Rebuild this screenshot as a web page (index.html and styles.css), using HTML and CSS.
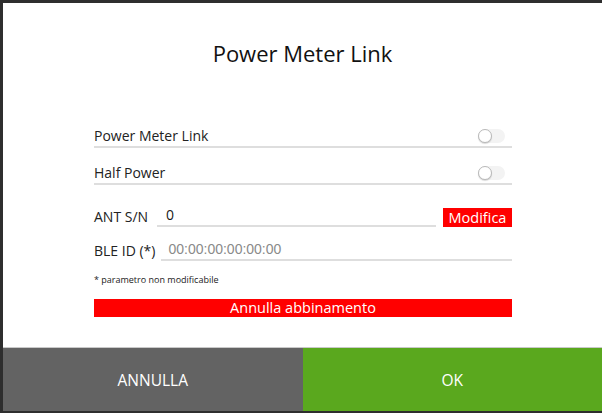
FILE: index.html
```html
<!DOCTYPE html>
<html lang="it">
<head>
<meta charset="utf-8">
<title>Power Meter Link</title>
<link rel="stylesheet" href="styles.css">
</head>
<body>
<div class="dialog">
  <div class="content">
    <h1 class="title">Power Meter Link</h1>
    <div class="form">
      <div class="row toggle-row first">
        <span class="label">Power Meter Link</span>
        <span class="switch"><span class="knob"></span></span>
      </div>
      <div class="row toggle-row">
        <span class="label">Half Power</span>
        <span class="switch"><span class="knob"></span></span>
      </div>
      <div class="field-row ant">
        <span class="label">ANT S/N</span>
        <span class="input value">0</span>
        <span class="btn-small">Modifica</span>
      </div>
      <div class="field-row ble">
        <span class="label">BLE ID (*)</span>
        <span class="input placeholder">00:00:00:00:00:00</span>
      </div>
      <div class="note">* parametro non modificabile</div>
      <div class="unpair">Annulla abbinamento</div>
    </div>
  </div>
  <div class="footer">
    <div class="fbtn cancel">ANNULLA</div>
    <div class="fbtn ok">OK</div>
  </div>
</div>
</body>
</html>
```
FILE: styles.css
```css
html, body {
  margin: 0;
  padding: 0;
  height: 100%;
  background: #2e2e2e;
  overflow: hidden;
}
body {
  font-family: "Open Sans", "Noto Sans", sans-serif;
  color: #1a1a1a;
}
.dialog {
  margin: 3px 0 0 3px;
  height: 408px;
  width: 599px;
  background: #fff;
  display: flex;
  flex-direction: column;
}
.content {
  flex: 1;
  display: flex;
  flex-direction: column;
  align-items: center;
}
.title {
  margin: 35px 0 0;
  font-weight: 400;
  font-size: 22px;
  line-height: 30px;
  color: #111;
}
.form {
  width: 418px;
  margin-left: 1px;
  margin-top: 45px;
  display: flex;
  flex-direction: column;
}
.label {
  font-size: 14px;
  line-height: 20px;
  color: #222;
}
.row {
  display: flex;
  align-items: center;
  justify-content: space-between;
  padding: 15px 0 0;
  border-bottom: 2px solid #dedede;
}
.row.first {
  padding-top: 13px;
}
.switch {
  width: 27px;
  height: 14px;
  border-radius: 7px;
  background: #f3f3f3;
  margin-right: 7px;
  position: relative;
}
.knob {
  position: absolute;
  left: 0;
  top: 0;
  width: 12px;
  height: 12px;
  border-radius: 50%;
  background: #fff;
  border: 1px solid #b9b9b9;
  box-shadow: 0 1px 1px rgba(0,0,0,0.15);
}
.field-row {
  display: flex;
  align-items: flex-end;
}
.field-row.ant {
  margin-top: 20px;
}
.field-row.ble {
  margin-top: 12px;
}
.input {
  flex: 1;
  font-size: 14px;
  line-height: 20px;
  border-bottom: 2px solid #dedede;
  margin-left: 9px;
  padding-left: 9px;
}
.field-row.ble .input {
  margin-left: 6px;
  padding-left: 7px;
}
.placeholder {
  color: #8a8a8a;
  font-family: "Liberation Sans", "Roboto", sans-serif;
}
.btn-small {
  margin-left: 7px;
  width: 69px;
  height: 19px;
  background: #ff0000;
  color: #fff;
  font-size: 14.5px;
  line-height: 19px;
  text-align: center;
}
.note {
  margin-top: 13px;
  font-size: 9px;
  line-height: 12px;
  color: #222;
}
.unpair {
  margin-top: 13px;
  height: 18px;
  background: #ff0000;
  color: #fff;
  font-size: 14.5px;
  line-height: 18px;
  text-align: center;
}
.footer {
  height: 63px;
  border-top: 1px solid #c9c9c9;
  display: flex;
}
.fbtn {
  flex: 1;
  display: flex;
  align-items: center;
  justify-content: center;
  color: #fff;
  font-size: 15.5px;
}
.cancel {
  background: #636363;
}
.ok {
  background: #5aa81e;
}
```
